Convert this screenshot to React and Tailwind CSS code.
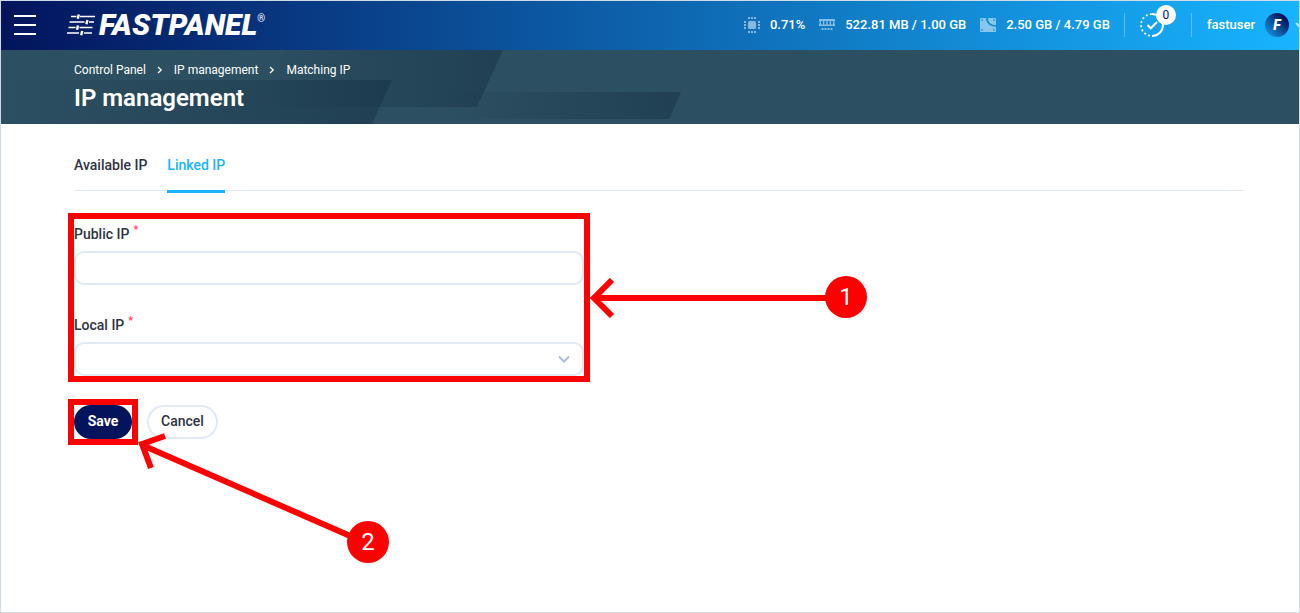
import React from "react";

function CpuIcon() {
  return (
    <svg width="16" height="16" viewBox="0 0 16 16" fill="white" fillOpacity="0.5" aria-hidden="true">
      <rect x="4" y="4" width="8" height="8" rx="1.5" />
      {[4, 7, 10].map((p) => (
        <g key={p}>
          <rect x={p} y="0" width="2" height="2" />
          <rect x={p} y="14" width="2" height="2" />
          <rect x="0" y={p} width="2" height="2" />
          <rect x="14" y={p} width="2" height="2" />
        </g>
      ))}
    </svg>
  );
}

function RamIcon() {
  return (
    <svg width="16" height="16" viewBox="0 0 16 16" fill="white" fillOpacity="0.5" aria-hidden="true">
      <path
        fillRule="evenodd"
        d="M1 2h14a1 1 0 0 1 1 1v1.500a1 1 0 0 0 0 2V9H0V6.500a1 1 0 0 0 0-2V3a1 1 0 0 1 1-1zM2 4v3.500h2V4zm3.300 0v3.500h2V4zm3.400 0v3.500h2V4zM12 4v3.500h2V4z"
      />
      {[2, 5, 8, 11].map((p) => (
        <rect key={p} x={p + 0.5} y="11" width="2" height="2" rx="0.500" />
      ))}
    </svg>
  );
}

function DiskIcon() {
  return (
    <svg width="16" height="16" viewBox="0 0 16 16" aria-hidden="true">
      <path
        fill="white"
        fillOpacity="0.5"
        fillRule="evenodd"
        d="M1 1h5c0 5 3.500 8.500 10 8.800V14a1 1 0 0 1-1 1H1a1 1 0 0 1-1-1V2a1 1 0 0 1 1-1zm.3 1.300v1.500h1.500V2.300zm0 9.900v1.500h1.500v-1.500zm11.900 0v1.500h1.500v-1.500zM8 1h7a1 1 0 0 1 1 1v6C11 8 8 5.500 8 1zm5.200 1.300v1.500h1.500V2.300z"
      />
    </svg>
  );
}

function TasksIcon() {
  return (
    <svg width="24" height="24" viewBox="0 0 24 24" fill="none" stroke="white" strokeWidth="2" aria-hidden="true">
      <path d="M12 1a11 11 0 0 1 0 22" />
      <path d="M12 23a11 11 0 0 1 0-22" strokeLinecap="round" strokeDasharray="0.100 4.200" strokeDashoffset="-3" />
      <path d="M7.500 12l3.300 3.300L17 9" />
    </svg>
  );
}

function LogoMark() {
  return (
    <svg width="28" height="22" viewBox="0 0 28 22" fill="none" stroke="white" aria-hidden="true">
      <g strokeWidth="1.600">
        <path d="M4 2.500h5.500M13 2.500h15M2.500 8h15M22 8h5M1.500 13.500h7M12.500 13.500h13M0 19h12M17 19h8" />
      </g>
      <g strokeWidth="2.400">
        <path d="M11.800 0.500l-1 4.200M20.400 6l-1 4.200M11 11.500l-1 4.200M15.200 17l-1 4.200" />
      </g>
    </svg>
  );
}

function Metric({ icon, children }) {
  return (
    <div className="flex items-center gap-2.5">
      {icon}
      <span>{children}</span>
    </div>
  );
}

function TopBar() {
  return (
    <header className="flex h-[49px] items-center justify-between overflow-hidden bg-[linear-gradient(to_right,#03145c,#18b4ff)] pb-0.5 text-[13px] font-medium text-white">
      <div className="flex items-center">
        <button type="button" aria-label="Open menu" className="ml-[13px] flex w-[22px] flex-col gap-[7px]">
          <span className="h-0.5 w-full bg-white" />
          <span className="h-0.5 w-full bg-white" />
          <span className="h-0.5 w-full bg-white" />
        </button>
        <a href="#" className="ml-[31px] flex items-center gap-1">
          <LogoMark />
          <span className="text-[30px] leading-8 font-black italic">FASTPANEL</span>
          <span className="-ml-1 self-start text-[10px] leading-5 font-normal">®</span>
        </a>
      </div>
      <div className="flex items-center">
        <div className="flex items-center gap-3.5">
          <Metric icon={<CpuIcon />}>0.71%</Metric>
          <Metric icon={<RamIcon />}>522.81 MB / 1.00 GB</Metric>
          <Metric icon={<DiskIcon />}>2.50 GB / 4.79 GB</Metric>
        </div>
        <span className="ml-3.5 h-6 w-px bg-white/30" />
        <button type="button" aria-label="Tasks" className="relative ml-[15px]">
          <TasksIcon />
          <span className="absolute -top-2 left-4 flex size-5 items-center justify-center rounded-full bg-white text-xs font-normal text-[#03145c]">
            0
          </span>
        </button>
        <span className="ml-[27px] h-6 w-px bg-white/30" />
        <button type="button" className="ml-[15px] flex items-center">
          <span>fastuser</span>
          <span className="ml-2.5 flex size-6 items-center justify-center rounded-full bg-[linear-gradient(to_bottom_left,#03145c_20%,#18a4f0)] text-sm font-black italic">
            F
          </span>
          <svg className="ml-1.5 -mr-1.5" width="10" height="10" viewBox="0 0 10 10" fill="none" stroke="white" strokeOpacity="0.7" strokeWidth="2" aria-hidden="true">
            <path d="M1 3l4 4 4-4" />
          </svg>
        </button>
      </div>
    </header>
  );
}

function Chevron() {
  return (
    <svg width="6" height="8" viewBox="0 0 6 8" fill="none" stroke="white" strokeWidth="1.300" aria-hidden="true">
      <path d="M1 1l3.200 3L1 7" />
    </svg>
  );
}

function PageHeading() {
  return (
    <div className="relative h-[74px] overflow-hidden bg-[#2c4f61] pt-3 pl-[73px] text-white">
      <svg className="absolute top-0 left-0" width="700" height="74" viewBox="1 0 700 74" aria-hidden="true">
        <defs>
          <linearGradient id="shade" x1="0" x2="1" y1="0" y2="0">
            <stop offset="0" stopColor="#153044" stopOpacity="0" />
            <stop offset="1" stopColor="#153044" stopOpacity="0.5" />
          </linearGradient>
        </defs>
        <polygon points="284,0 503,0 477,57 258,57" fill="url(#shade)" />
        <polygon points="20,30 392,30 372,74 0,74" fill="url(#shade)" />
        <polygon points="456,42 681,42 669,69 444,69" fill="url(#shade)" />
      </svg>
      <nav aria-label="Breadcrumb" className="relative flex items-center gap-[11px] text-xs leading-4">
        <a href="#">Control Panel</a>
        <Chevron />
        <a href="#">IP management</a>
        <Chevron />
        <span>Matching IP</span>
      </nav>
      <h1 className="relative mt-1 text-2xl leading-8 font-semibold">IP management</h1>
    </div>
  );
}

function Required() {
  return <span className="ml-1 self-start text-[11px] leading-3 text-[#ff3b5c]">*</span>;
}

function Marker({ className, children }) {
  return (
    <span className={`absolute flex size-[42px] items-center justify-center rounded-full bg-[#ff0000] text-2xl font-normal text-white ${className}`}>
      {children}
    </span>
  );
}

export default function App() {
  return (
    <div className="flex min-h-screen flex-col overflow-hidden border border-[#cfdbe7] bg-white font-['Roboto','Liberation_Sans',sans-serif] text-[#2f3342]">
      <TopBar />
      <PageHeading />
      <main className="pt-[31px] pr-[55px] pl-[73px] text-sm leading-5 font-medium">
        <nav aria-label="IP sections" className="flex gap-5 border-b border-[#e0e9f4]">
          <a href="#" className="pb-[15px]">
            Available IP
          </a>
          <a href="#" className="-mb-[3px] border-b-3 border-[#18b4ff] pb-[15px] text-[#18b4ff]">
            Linked IP
          </a>
        </nav>
        <form className="mt-[33px]">
          <div className="relative flex max-w-[510px] flex-col gap-[30px]">
            <div className="flex flex-col gap-[7px]">
              <label htmlFor="public-ip" className="flex">
                Public IP
                <Required />
              </label>
              <input id="public-ip" type="text" className="h-[34px] w-full rounded-[10px] border-2 border-[#e0e9f4] bg-white px-3" />
            </div>
            <div className="flex flex-col gap-[7px]">
              <label htmlFor="local-ip" className="flex">
                Local IP
                <Required />
              </label>
              <div className="relative">
                <select id="local-ip" defaultValue="" className="block h-[34px] w-full appearance-none rounded-[10px] border-2 border-[#e0e9f4] bg-white px-3">
                  <option value="" />
                </select>
                <svg className="pointer-events-none absolute top-3 right-3.5" width="12" height="10" viewBox="0 0 12 10" fill="none" stroke="#adbcd8" strokeWidth="2" aria-hidden="true">
                  <path d="M1 2.500l5 5 5-5" />
                </svg>
              </div>
            </div>
            <div className="pointer-events-none absolute -top-[11px] -right-1.5 -bottom-1.5 -left-1.5 border-6 border-[#ff0000]" />
            <svg className="pointer-events-none absolute top-[54px] left-[516px]" width="240" height="40" viewBox="0 0 240 40" fill="none" stroke="#ff0000" strokeWidth="6" aria-hidden="true">
              <path d="M5 20h235M22 2L4 20l18 18" />
            </svg>
            <Marker className="top-[52px] left-[751px]">1</Marker>
          </div>
          <div className="mt-[29px] flex gap-[15px]">
            <div className="relative">
              <button type="submit" className="h-[34px] min-w-[58px] rounded-full bg-[#03145c] pb-0.5 font-bold text-white">
                Save
              </button>
              <div className="pointer-events-none absolute -inset-1.5 border-6 border-[#ff0000]" />
              <svg className="pointer-events-none absolute top-[27px] left-[62px] z-10" width="230" height="116" viewBox="0 0 230 116" fill="none" stroke="#ff0000" strokeWidth="6" aria-hidden="true">
                <path d="M6 13l222 97M29 4L6 12l9 24" />
              </svg>
              <Marker className="top-[116px] left-[273px]">2</Marker>
            </div>
            <button type="button" className="h-[34px] min-w-[71px] rounded-full border-2 border-[#e0e9f4] bg-white pb-0.5">
              Cancel
            </button>
          </div>
        </form>
      </main>
    </div>
  );
}
